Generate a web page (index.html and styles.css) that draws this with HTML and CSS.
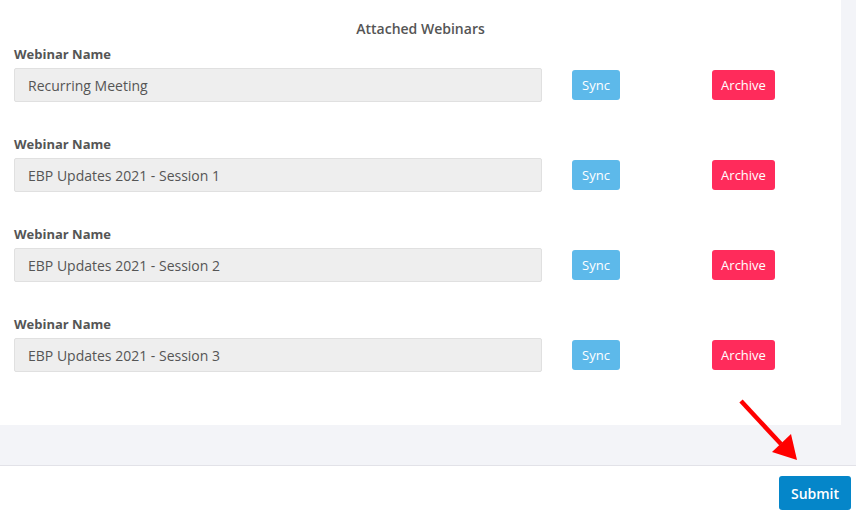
FILE: index.html
```html
<!DOCTYPE html>
<html>
<head>
<meta charset="utf-8">
<link rel="stylesheet" href="styles.css">
</head>
<body>
<div class="page">
  <div class="main">
    <div class="card">
      <h3 class="title">Attached Webinars</h3>
      <div class="row">
        <div class="field">
          <label class="label">Webinar Name</label>
          <div class="input-line">
            <div class="input">Recurring Meeting</div>
            <button class="btn sync">Sync</button>
            <button class="btn archive">Archive</button>
          </div>
        </div>
      </div>
      <div class="row">
        <div class="field">
          <label class="label">Webinar Name</label>
          <div class="input-line">
            <div class="input">EBP Updates 2021 - Session 1</div>
            <button class="btn sync">Sync</button>
            <button class="btn archive">Archive</button>
          </div>
        </div>
      </div>
      <div class="row">
        <div class="field">
          <label class="label">Webinar Name</label>
          <div class="input-line">
            <div class="input">EBP Updates 2021 - Session 2</div>
            <button class="btn sync">Sync</button>
            <button class="btn archive">Archive</button>
          </div>
        </div>
      </div>
      <div class="row">
        <div class="field">
          <label class="label">Webinar Name</label>
          <div class="input-line">
            <div class="input">EBP Updates 2021 - Session 3</div>
            <button class="btn sync">Sync</button>
            <button class="btn archive">Archive</button>
          </div>
        </div>
      </div>
    </div>
    <div class="side"></div>
  </div>
  <div class="gap"></div>
  <div class="footer">
    <button class="submit">Submit</button>
  </div>
  <svg class="arrow" width="856" height="519" viewBox="0 0 856 519">
    <line x1="741" y1="401" x2="781" y2="444" stroke="#ff0000" stroke-width="4.5"/>
    <polygon points="772,452 791,434 797,460" fill="#ff0000"/>
  </svg>
</div>
</body>
</html>
```
FILE: styles.css
```css
* { box-sizing: border-box; }
html, body { margin: 0; padding: 0; }
body {
  font-family: "Open Sans", "Liberation Sans", sans-serif;
  background: #ffffff;
  color: #555;
  width: 856px;
  height: 519px;
  overflow: hidden;
}
.page { position: relative; width: 856px; height: 519px; }
.main { display: flex; height: 425px; }
.card {
  width: 841px;
  background: #fff;
  padding: 19px 0 0 14px;
}
.side { flex: 1; background: #f3f4f8; }
.title {
  margin: 0;
  text-align: center;
  font-size: 14px;
  font-weight: 600;
  line-height: 20px;
  color: #555;
  padding-right: 14px;
}
.row { height: 90px; }
.field { padding-top: 6px; }
.label {
  display: block;
  font-size: 13px;
  font-weight: 700;
  color: #555;
  line-height: 18px;
  height: 18px;
  margin-bottom: 5px;
}
.input-line { display: flex; align-items: center; }
.input {
  width: 528px;
  height: 34px;
  background: #eeeeee;
  border: 1px solid #e0e0e0;
  border-radius: 2px;
  font-size: 14px;
  color: #555;
  line-height: 34px;
  padding-left: 13px;
}
.btn {
  font-family: inherit;
  border: none;
  border-radius: 3px;
  color: #fff;
  font-size: 13px;
  height: 30px;
  padding: 0;
  cursor: pointer;
}
.sync { width: 48px; background: #5db9ea; margin-left: 30px; }
.archive { width: 63px; background: #ff2b5b; margin-left: 92px; }
.gap { height: 41px; background: #f3f4f8; border-bottom: 1px solid #e2e2e8; }
.footer {
  display: flex;
  justify-content: flex-end;
  padding: 10px 5px 0 0;
}
.submit {
  font-family: inherit;
  background: #0586c9;
  color: #fff;
  border: none;
  border-radius: 3px;
  width: 72px;
  height: 34px;
  font-size: 14px;
  font-weight: 600;
  padding: 0;
}
.arrow { position: absolute; left: 0; top: 0; pointer-events: none; }
```
